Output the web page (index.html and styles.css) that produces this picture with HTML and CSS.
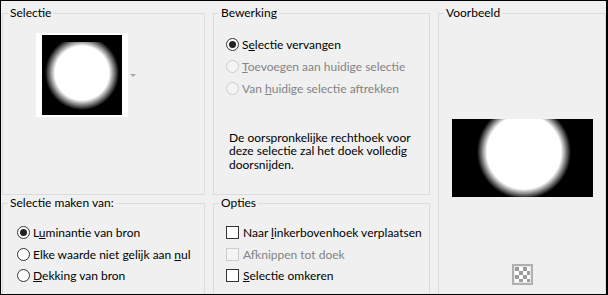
FILE: index.html
```html
<!DOCTYPE html>
<html lang="nl">
<head>
    <meta charset="UTF-8">
    <title>Masker uit afbeelding</title>
    <link rel="stylesheet" href="styles.css">
</head>
<body>
    <div class="dialog">
        <!-- Selectie -->
        <fieldset class="group">
            <legend>Selectie</legend>
            <div class="source">
                <div class="thumb"><div class="thumb-img"></div></div>
                <span class="drop-arrow"></span>
            </div>
        </fieldset>

        <!-- Bewerking -->
        <fieldset class="group">
            <legend>Bewerking</legend>
            <div class="options edit">
                <label class="option"><span class="radio checked"></span><span>S<u>e</u>lectie vervangen</span></label>
                <label class="option disabled"><span class="radio"></span><span><u>T</u>oevoegen aan huidige selectie</span></label>
                <label class="option disabled"><span class="radio"></span><span>Van <u>h</u>uidige selectie aftrekken</span></label>
            </div>
            <p class="note">De oorspronkelijke rechthoek voor deze selectie zal het doek volledig doorsnijden.</p>
        </fieldset>

        <!-- Voorbeeld -->
        <fieldset class="group preview-group">
            <legend>Voorbeeld</legend>
            <div class="preview">
                <div class="preview-img"></div>
                <div class="checker-btn"><div class="checker"></div></div>
            </div>
        </fieldset>

        <!-- Selectie maken van -->
        <fieldset class="group">
            <legend>Selectie maken van:</legend>
            <div class="options make">
                <label class="option"><span class="radio checked"></span><span>L<u>u</u>minantie van bron</span></label>
                <label class="option"><span class="radio"></span><span>Elke waarde niet gelijk aan <u>n</u>ul</span></label>
                <label class="option"><span class="radio"></span><span><u>D</u>ekking van bron</span></label>
            </div>
        </fieldset>

        <!-- Opties -->
        <fieldset class="group">
            <legend>Opties</legend>
            <div class="options flags">
                <label class="option"><span class="check"></span><span>Naar <u>l</u>inkerbovenhoek verplaatsen</span></label>
                <label class="option disabled"><span class="check"></span><span>Af<u>k</u>nippen tot doek</span></label>
                <label class="option"><span class="check"></span><span><u>S</u>electie omkeren</span></label>
            </div>
        </fieldset>
    </div>
</body>
</html>
```

FILE: styles.css
```css
/* General Styles */
body {
    margin: 0;
    font-family: Lato, "Noto Sans", sans-serif;
    font-size: 12px;
    color: #000;
    background-color: #f0f0f0;
}
.dialog {
    width: 608px;
    height: 295px;
    box-sizing: border-box;
    border: 1px solid #000;
    border-right-width: 2px;
    background-color: #f0f0f0;
    overflow: hidden;
    display: grid;
    grid-template-columns: 203px 217px 168px;
    grid-template-rows: 190px 140px;
    column-gap: 8px;
    padding: 4px 0 0 1px;
}

/* Group boxes */
.group {
    margin: 0;
    padding: 0;
    min-width: 0;
    border: 1px solid #dcdcdc;
}
.group legend {
    margin-left: 5px;
    padding: 0 2px;
    line-height: 16px;
    font-size: 12px;
}
.preview-group {
    grid-row: 1 / 3;
    grid-column: 3;
}

/* Selectie thumbnail */
.source {
    display: flex;
    align-items: center;
    margin: 12px 0 0 33px;
}
.thumb {
    background: #fff;
    padding: 2px 6px;
}
.thumb-img {
    width: 80px;
    height: 80px;
    background:
        linear-gradient(#000 7px, transparent 7px),
        radial-gradient(circle at 40px 38px, #fff 27px, #000 37px);
}
.drop-arrow {
    margin-left: 2px;
    border-left: 3px solid transparent;
    border-right: 3px solid transparent;
    border-top: 3px solid #a8a8a8;
}

/* Radio / checkbox rows */
.options {
    display: flex;
    flex-direction: column;
}
.option {
    display: flex;
    align-items: center;
    height: 22px;
    white-space: nowrap;
}
.option u {
    text-decoration-thickness: 1px;
}
.edit {
    padding: 12px 0 0 12px;
}
.make {
    padding: 11px 0 0 14px;
}
.flags {
    padding: 11px 0 0 12px;
}
.make .option,
.flags .option {
    height: 21.5px;
}
.radio {
    width: 11px;
    height: 11px;
    border: 1px solid #333;
    border-radius: 50%;
    background: #fff;
    margin-right: 3px;
    display: flex;
    align-items: center;
    justify-content: center;
    flex-shrink: 0;
}
.radio.checked::after {
    content: "";
    width: 7px;
    height: 7px;
    border-radius: 50%;
    background: #222;
}
.check {
    width: 11px;
    height: 11px;
    border: 1px solid #333;
    background: #fff;
    margin-right: 4px;
    flex-shrink: 0;
}
.disabled {
    color: #838383;
}
.disabled .radio,
.disabled .check {
    border-color: #cccccc;
    background: #f4f4f4;
}

.note {
    margin: 32px 0 0 15px;
    line-height: 13.3px;
    width: 190px;
}

/* Voorbeeld */
.preview {
    display: flex;
    flex-direction: column;
    align-items: center;
}
.preview-img {
    margin-top: 98px;
    width: 141px;
    height: 78px;
    background: radial-gradient(circle at 72px 33px, #fff 37px, #000 47px);
}
.checker-btn {
    margin-top: 67px;
    width: 15px;
    height: 15px;
    padding: 1px;
    border: 2px solid #b0b0b0;
    background: #e8e8e8;
}
.checker {
    width: 15px;
    height: 15px;
    background: repeating-conic-gradient(#fff 0 25%, #9c9c9c 0 50%) 0 0 / 8px 8px;
}
```
